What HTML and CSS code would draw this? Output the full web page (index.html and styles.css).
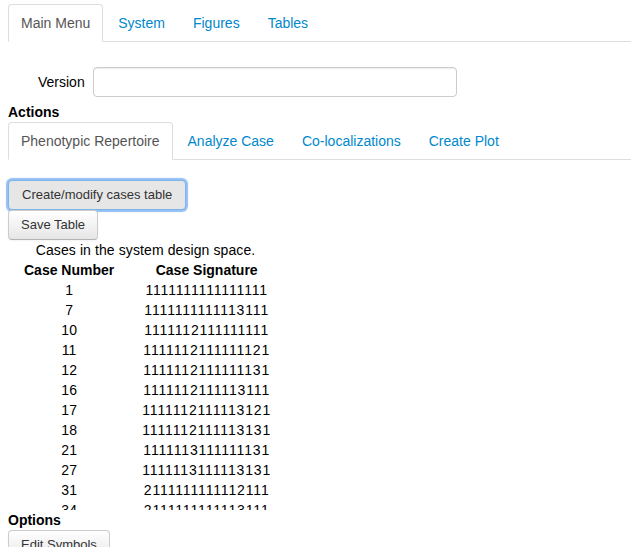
FILE: index.html
```html
<!DOCTYPE html>
<html>
<head>
<meta charset="utf-8">
<link rel="stylesheet" href="styles.css">
</head>
<body>
<div class="page">
  <ul class="nav-tabs main-tabs">
    <li class="active"><a>Main Menu</a></li>
    <li><a>System</a></li>
    <li><a>Figures</a></li>
    <li><a>Tables</a></li>
  </ul>
  <div class="version-row">
    <label class="version-label">Version</label>
    <input class="version-input" type="text">
  </div>
  <div class="section-title actions-title">Actions</div>
  <ul class="nav-tabs">
    <li class="active"><a>Phenotypic Repertoire</a></li>
    <li><a>Analyze Case</a></li>
    <li><a>Co-localizations</a></li>
    <li><a>Create Plot</a></li>
  </ul>
  <button class="btn btn-focus">Create/modify cases table</button>
  <button class="btn">Save Table</button>
  <div class="table-scroll">
    <table class="cases">
      <caption>Cases in the system design space.</caption>
      <thead>
        <tr><th>Case Number</th><th class="sig">Case Signature</th></tr>
      </thead>
      <tbody>
        <tr><td>1</td><td class="sig">1111111111111111</td></tr>
        <tr><td>7</td><td class="sig">1111111111113111</td></tr>
        <tr><td>10</td><td class="sig">1111112111111111</td></tr>
        <tr><td>11</td><td class="sig">1111112111111121</td></tr>
        <tr><td>12</td><td class="sig">1111112111111131</td></tr>
        <tr><td>16</td><td class="sig">1111112111113111</td></tr>
        <tr><td>17</td><td class="sig">1111112111113121</td></tr>
        <tr><td>18</td><td class="sig">1111112111113131</td></tr>
        <tr><td>21</td><td class="sig">1111113111111131</td></tr>
        <tr><td>27</td><td class="sig">1111113111113131</td></tr>
        <tr><td>31</td><td class="sig">2111111111112111</td></tr>
        <tr><td>34</td><td class="sig">2111111111113111</td></tr>
        <tr><td>37</td><td class="sig">2111111111113121</td></tr>
      </tbody>
    </table>
  </div>
  <div class="section-title">Options</div>
  <button class="btn">Edit Symbols</button>
</div>
</body>
</html>
```

FILE: styles.css
```css
html, body {
  margin: 0;
  padding: 0;
  background: #fff;
}

body {
  font-family: "Liberation Sans", Arial, Helvetica, sans-serif;
  font-size: 14px;
  line-height: 20px;
  color: #333;
}

.page {
  padding: 4px 6px 0 8px;
}

.nav-tabs {
  display: flex;
  list-style: none;
  margin: 0 0 20px 0;
  padding: 0;
  border-bottom: 1px solid #ddd;
}

.nav-tabs li {
  margin-bottom: -1px;
}

.nav-tabs a {
  display: block;
  padding: 8px 12px;
  line-height: 20px;
  margin-right: 2px;
  border: 1px solid transparent;
  border-radius: 4px 4px 0 0;
  color: #0088cc;
  cursor: pointer;
}

.nav-tabs li.active a {
  color: #555;
  background: #fff;
  border-color: #ddd #ddd transparent #ddd;
}

.main-tabs {
  margin-bottom: 25px;
}

.version-row {
  display: flex;
  align-items: center;
  padding-left: 30px;
}

.version-label {
  color: #000;
  margin-right: 8px;
}

.version-input {
  box-sizing: border-box;
  width: 364px;
  height: 30px;
  padding: 4px 6px;
  border: 1px solid #ccc;
  border-radius: 4px;
  box-shadow: inset 0 1px 1px rgba(0, 0, 0, 0.075);
  font: inherit;
  margin: 0;
}

.section-title {
  font-weight: bold;
  color: #000;
  line-height: 20px;
}

.actions-title {
  margin-top: 5px;
}

.btn {
  display: block;
  box-sizing: border-box;
  height: 30px;
  margin: 0;
  padding: 4px 12px;
  font-family: "Liberation Sans", Arial, Helvetica, sans-serif;
  font-size: 13px;
  line-height: 20px;
  color: #333;
  background: linear-gradient(to bottom, #ffffff, #e6e6e6);
  border: 1px solid #cccccc;
  border-bottom-color: #b3b3b3;
  border-radius: 4px;
  box-shadow: inset 0 1px 0 rgba(255, 255, 255, 0.2), 0 1px 2px rgba(0, 0, 0, 0.05);
}

.btn-focus {
  background: #e6e6e6;
  border-color: #7fb4ea;
  box-shadow: 0 0 1px 2px rgba(110, 170, 240, 0.75);
  padding: 4px 13px;
}

.table-scroll {
  height: 270px;
  overflow: hidden;
}

.cases {
  border-collapse: collapse;
  border-spacing: 0;
  color: #000;
}

.cases caption {
  line-height: 20px;
  text-align: center;
  letter-spacing: 0.1px;
}

.cases th,
.cases td {
  padding: 0 16px;
  line-height: 20px;
  text-align: center;
  white-space: nowrap;
}

.cases th.sig,
.cases td.sig {
  padding: 0 12px;
}

.cases td.sig {
  letter-spacing: 0.85px;
}

.cases th {
  font-weight: bold;
}
```
